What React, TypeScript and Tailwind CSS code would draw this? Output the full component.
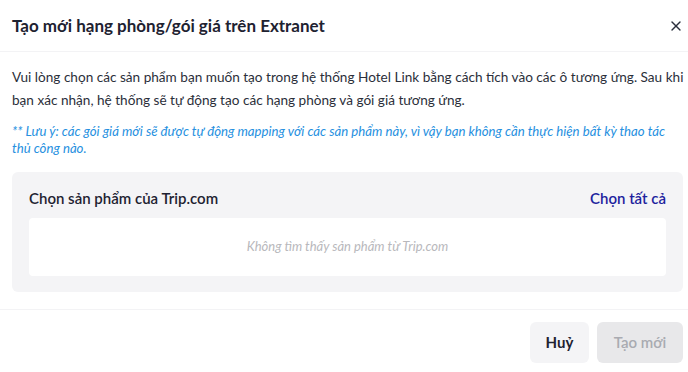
import React from 'react';
import { X } from 'lucide-react';

const font = { fontFamily: 'Lato, "Noto Sans", sans-serif' };

const App = () => {
  return (
    <div className="w-[688px] h-[372px] bg-white text-[#1f2330]" style={font}>
      <div className="flex items-center justify-between h-[52px] pl-3 border-b border-[#f3f3f5]">
        <h1 className="text-[17px] font-bold text-[#1e2231]">Tạo mới hạng phòng/gói giá trên Extranet</h1>
        <button className="w-6 h-6 flex items-center justify-center text-[#2a2f3d]">
          <X size={16} strokeWidth={2} />
        </button>
      </div>

      <div className="pl-3 pr-[5px] pt-[14px] pb-[17px] border-b border-[#f3f3f5]">
        <p className="mr-[-3px] text-[13.6px] leading-[23px] text-[#2b2f3a]">
          Vui lòng chọn các sản phẩm bạn muốn tạo trong hệ thống Hotel Link bằng cách tích vào các ô tương ứng. Sau khi bạn xác nhận, hệ thống sẽ tự động tạo các hạng phòng và gói giá tương ứng.
        </p>
        <p className="mt-[11px] pr-4 text-[13.2px] leading-[17px] italic text-[#2690e0]">
          ** Lưu ý: các gói giá mới sẽ được tự động mapping với các sản phẩm này, vì vậy bạn không cần thực hiện bất kỳ thao tác thủ công nào.
        </p>

        <div className="mt-[15px] bg-[#f4f4f6] rounded-md px-[17px] pt-[16px] pb-4">
          <div className="flex items-center justify-between h-5">
            <span className="text-[15px] font-semibold text-[#1e2231]">Chọn sản phẩm của Trip.com</span>
            <button className="text-[15px] font-semibold text-[#1d1f9e]">Chọn tất cả</button>
          </div>
          <div className="mt-[10px] h-[58px] bg-white rounded flex items-center justify-center">
            <span className="text-[13px] italic text-[#b8b8bc]">Không tìm thấy sản phẩm từ Trip.com</span>
          </div>
        </div>
      </div>

      <div className="flex justify-end gap-2 px-[5px] pt-[12px]">
        <button className="w-[59px] h-[41px] rounded-md bg-[#f4f4f6] text-[15px] font-bold text-[#1e2231]">Huỷ</button>
        <button className="w-[86px] h-[41px] rounded-md bg-[#e8e8ea] text-[15px] font-semibold text-[#a9abb1]">Tạo mới</button>
      </div>
    </div>
  );
};

export default App;
